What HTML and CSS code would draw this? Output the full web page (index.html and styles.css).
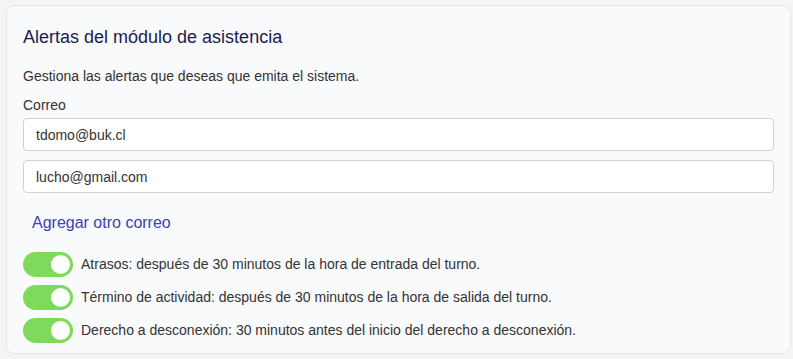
FILE: index.html
```html
<!DOCTYPE html>
<html lang="es">
<head>
    <meta charset="UTF-8">
    <meta name="viewport" content="width=device-width, initial-scale=1.0">
    <title>Alertas del módulo de asistencia</title>
    <link rel="stylesheet" href="styles.css">
</head>
<body>
    <div class="card">
        <h2 class="card-title">Alertas del módulo de asistencia</h2>
        <p class="card-desc">Gestiona las alertas que deseas que emita el sistema.</p>

        <label class="field-label">Correo</label>
        <div class="email-list">
            <input type="email" class="email-input" value="tdomo@buk.cl">
            <input type="email" class="email-input" value="lucho@gmail.com">
        </div>
        <a href="#" class="add-link">Agregar otro correo</a>

        <div class="alerts">
            <div class="alert-row">
                <span class="switch on"><span class="knob"></span></span>
                <span>Atrasos: después de 30 minutos de la hora de entrada del turno.</span>
            </div>
            <div class="alert-row">
                <span class="switch on"><span class="knob"></span></span>
                <span>Término de actividad: después de 30 minutos de la hora de salida del turno.</span>
            </div>
            <div class="alert-row">
                <span class="switch on"><span class="knob"></span></span>
                <span>Derecho a desconexión: 30 minutos antes del inicio del derecho a desconexión.</span>
            </div>
        </div>
    </div>
</body>
</html>
```

FILE: styles.css
```css
body {
    margin: 0;
    padding: 5px 2px 0 6px;
    background: #f4f5f7;
    font-family: "Liberation Sans", Arial, sans-serif;
    color: #333;
}
.card {
    background: #f9fafb;
    border: 1px solid #e3e5e8;
    border-radius: 8px;
    padding: 19px 16px 10px 16px;
    height: 349px;
    box-sizing: border-box;
}
.card-title {
    margin: 0 0 18px;
    font-size: 18px;
    font-weight: normal;
    color: #1c1c4f;
    line-height: 24px;
}
.card-desc {
    margin: 0 0 11px;
    font-size: 14px;
    line-height: 18px;
}
.field-label {
    display: block;
    font-size: 14px;
    line-height: 18px;
    margin-bottom: 4px;
}
.email-list {
    display: flex;
    flex-direction: column;
    gap: 9px;
}
.email-input {
    height: 33px;
    box-sizing: border-box;
    border: 1px solid #cfd2d6;
    border-radius: 4px;
    padding: 0 12px;
    background: #fff;
    font-family: inherit;
    font-size: 14px;
    color: #333;
}
.add-link {
    display: block;
    margin: 18px 0 0 9px;
    font-size: 16px;
    line-height: 24px;
    color: #3b41b5;
    text-decoration: none;
}
.alerts {
    margin-top: 17px;
    display: flex;
    flex-direction: column;
    gap: 8px;
}
.alert-row {
    display: flex;
    align-items: center;
    gap: 8px;
    font-size: 14px;
    line-height: 25px;
}
.switch {
    width: 50px;
    height: 25px;
    border-radius: 13px;
    background: #7fd95b;
    position: relative;
    flex-shrink: 0;
}
.knob {
    position: absolute;
    top: 1px;
    right: 1px;
    width: 19px;
    height: 19px;
    border-radius: 50%;
    background: #fff;
    border: 2px solid #7fd95b;
}
```
